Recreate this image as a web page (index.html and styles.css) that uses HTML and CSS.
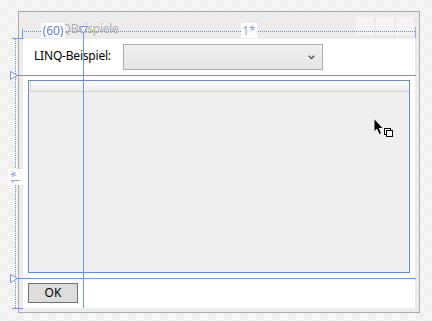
FILE: index.html
```html
<!DOCTYPE html>
<html lang="de">
<head>
    <meta charset="UTF-8">
    <title>LINQBeispiele - Designer</title>
    <link rel="stylesheet" href="styles.css">
</head>
<body>
    <div class="canvas">
        <!-- the window being designed -->
        <div class="window">
            <div class="titlebar">
                <span class="title">LINQBeispiele</span>
                <div class="caption-buttons">
                    <span></span><span></span><span></span>
                </div>
            </div>
            <div class="client">
                <div class="row row-top">
                    <label class="field-label">LINQ-Beispiel:</label>
                    <div class="combo">
                        <svg width="7" height="5" viewBox="0 0 7 5"><path d="M0.7 0.7 L3.5 3.5 L6.3 0.7" fill="none" stroke="#555" stroke-width="1.4"/></svg>
                    </div>
                </div>
                <div class="row row-list">
                    <div class="listview">
                        <div class="lv-header"></div>
                    </div>
                </div>
                <div class="row row-bottom">
                    <button class="btn">OK</button>
                </div>
            </div>
        </div>

        <!-- grid adorners drawn by the designer over the window -->
        <div class="adorner dot-h"></div>
        <div class="adorner end-tick"></div>
        <div class="adorner bracket-top"></div>
        <div class="adorner bracket-bottom"></div>
        <div class="adorner dot-v"></div>
        <div class="adorner line-h row-line-1"></div>
        <div class="adorner line-h row-line-2"></div>
        <div class="adorner line-v"></div>

        <svg class="adorner tri-top" width="9" height="8" viewBox="0 0 9 8"><path d="M0.5 0.5 H8.5 L4.5 7.5 Z" fill="#fff" stroke="#6f96e0"/></svg>
        <svg class="adorner tri-left tri-1" width="8" height="9" viewBox="0 0 8 9"><path d="M0.5 0.5 V8.5 L7.5 4.5 Z" fill="#fff" stroke="#6f96e0"/></svg>
        <svg class="adorner tri-left tri-2" width="8" height="9" viewBox="0 0 8 9"><path d="M0.5 0.5 V8.5 L7.5 4.5 Z" fill="#fff" stroke="#6f96e0"/></svg>

        <span class="adorner tag tag-60">(60)</span>
        <span class="adorner tag tag-star">1*</span>
        <span class="adorner tag tag-star-v"><span>1*</span></span>

        <!-- mouse cursor (copy) -->
        <svg class="adorner cursor" width="20" height="20" viewBox="0 0 20 20">
            <path d="M0.5 0.5 L0.5 12 L3 9.6 L5.4 15 L7 14.3 L4.7 9 L8.4 9 Z" fill="#000"/>
            <rect x="10.5" y="9.5" width="6" height="6" fill="#fff" stroke="#000"/>
            <rect x="12.5" y="11.5" width="6" height="6" fill="#fff" stroke="#000"/>
        </svg>
    </div>
</body>
</html>
```

FILE: styles.css
```css
/* Designer surface */
body {
    margin: 0;
    font-family: "Noto Sans", "Open Sans", sans-serif;
    font-size: 12px;
}
.canvas {
    position: relative;
    width: 432px;
    height: 321px;
    overflow: hidden;
    background: repeating-conic-gradient(#f0f0f0 0 25%, #f7f7f7 0 50%) 0 0 / 16px 16px;
    padding-top: 11px;
    box-sizing: border-box;
}

/* Window chrome */
.window {
    width: 402px;
    height: 302px;
    margin-left: 18px;
    border: 1px solid #ababab;
    background-color: #ececec;
    box-sizing: border-box;
}
.titlebar {
    height: 27px;
    display: flex;
    align-items: flex-start;
}
.title {
    padding: 9px 0 0 24px;
    line-height: 16px;
    letter-spacing: -0.3px;
    color: #b0b0b0;
}
.caption-buttons {
    margin-left: auto;
    padding: 5px 5px 0 0;
    display: flex;
    gap: 2px;
}
.caption-buttons span {
    width: 18px;
    height: 18px;
    background-color: #f4f4f4;
}

/* Client area */
.client {
    margin: 0 4px;
    height: 269px;
    background-color: #fff;
    display: flex;
    flex-direction: column;
}
.row-top {
    height: 36px;
    display: flex;
    align-items: flex-start;
    padding-left: 11px;
}
.field-label {
    width: 89px;
    margin-top: 9px;
    line-height: 16px;
    letter-spacing: -0.2px;
    color: #000;
}
.combo {
    width: 200px;
    height: 26px;
    margin-top: 5px;
    border: 1px solid #acacac;
    background: linear-gradient(#f0f0f0, #e5e5e5);
    box-sizing: border-box;
    display: flex;
    align-items: center;
    justify-content: flex-end;
    padding: 1px 7px 0 0;
}
.row-list {
    height: 203px;
    padding: 5px;
    box-sizing: border-box;
}
.listview {
    height: 100%;
    border: 1px solid #6b8cb5;
    background-color: #efefef;
    box-sizing: border-box;
}
.lv-header {
    height: 11px;
    border-left: 1px solid #fff;
    border-bottom: 1px solid #d5d5d5;
    box-shadow: inset 1px 0 #d5d5d5;
    background: linear-gradient(#fff, #ececec);
    box-sizing: border-box;
}
.row-bottom {
    flex: 1;
    padding: 5px 0 0 5px;
}
.btn {
    width: 50px;
    height: 20px;
    border: 1px solid #707070;
    background-color: #ddd;
    font-family: inherit;
    font-size: 12px;
    color: #000;
    padding: 0;
    line-height: 16px;
}

/* Adorners */
.adorner {
    position: absolute;
}
.dot-h {
    left: 22px;
    top: 31px;
    width: 393px;
    height: 1px;
    background: repeating-linear-gradient(to right, #6a8edb 0 1px, transparent 1px 2px);
}
.dot-v {
    left: 15px;
    top: 39px;
    width: 1px;
    height: 269px;
    background: repeating-linear-gradient(to bottom, #6a8edb 0 1px, transparent 1px 2px);
}
.end-tick {
    left: 415px;
    top: 27px;
    width: 1px;
    height: 11px;
    background-color: #8fb0ea;
}
.bracket-top {
    left: 12px;
    top: 29px;
    width: 11px;
    height: 10px;
    border-right: 1px solid #6f96e0;
    border-bottom: 1px solid #6f96e0;
    box-sizing: border-box;
}
.bracket-bottom {
    left: 12px;
    top: 308px;
    width: 11px;
    height: 1px;
    background-color: #6f96e0;
}
.line-h {
    left: 14px;
    width: 402px;
    height: 1px;
    background-color: #6f96e0;
}
.row-line-1 {
    top: 75px;
}
.row-line-2 {
    top: 278px;
}
.line-v {
    left: 83px;
    top: 31px;
    width: 1px;
    height: 277px;
    background-color: #6f96e0;
}
.tri-top {
    left: 79px;
    top: 26px;
}
.tri-left {
    left: 10px;
}
.tri-1 {
    top: 71px;
}
.tri-2 {
    top: 274px;
}
.tag {
    background-color: #fff;
    line-height: 15px;
    text-align: center;
}
.tag-60 {
    left: 41px;
    top: 23px;
    width: 24px;
    height: 15px;
    color: #5f84d9;
}
.tag-star {
    left: 241px;
    top: 23px;
    width: 16px;
    height: 15px;
    color: #8b9ff0;
}
.tag-star-v {
    left: 8px;
    top: 169px;
    width: 15px;
    height: 16px;
    color: #8b9ff0;
    display: flex;
    align-items: center;
    justify-content: center;
}
.tag-star-v span {
    display: block;
    transform: rotate(-90deg);
}
.cursor {
    left: 374px;
    top: 119px;
}
```
